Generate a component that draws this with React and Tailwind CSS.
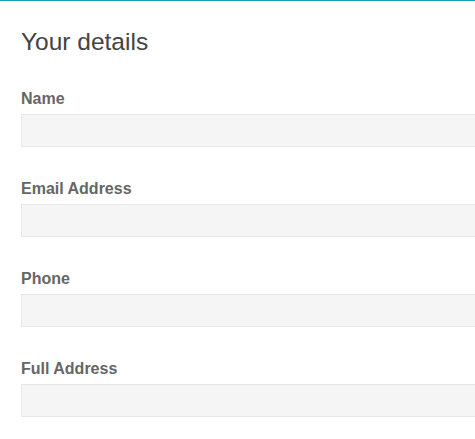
export default function App() {
  const fields = ['Name', 'Email Address', 'Phone', 'Full Address'];
  return (
    <div className="w-[475px] h-[439px] overflow-hidden bg-white border-t border-[#1a9fc0] font-['Liberation_Sans',Arial,sans-serif]">
      <div className="pl-[21px] pt-[27px]">
        <h2 className="text-[24.5px] leading-[28px] text-[#444]">Your details</h2>
        <div className="mt-[34px] flex flex-col gap-[33px]">
          {fields.map((f) => (
            <div key={f} className="flex flex-col">
              <label className="text-[16px] leading-[18px] font-bold text-[#666]">{f}</label>
              <input className="mt-[6px] w-[500px] h-[33px] bg-[#f5f5f5] border border-[#e8e8e8] outline-none" />
            </div>
          ))}
        </div>
      </div>
    </div>
  );
}
